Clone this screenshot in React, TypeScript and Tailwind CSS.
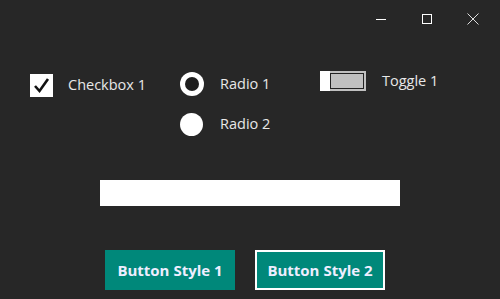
import React from "react";

export default function App() {
  const font = { fontFamily: '"Segoe UI", "Open Sans", "Noto Sans", sans-serif' };
  return (
    <div className="w-[500px] h-[299px] bg-[#272727] flex flex-col text-[#e8e8e8] overflow-hidden" style={font}>
      {/* title bar */}
      <div className="h-[38px] flex justify-end items-stretch pr-[4px]">
        <div className="w-[46px] flex items-center justify-center">
          <div className="w-[10px] h-px bg-white" />
        </div>
        <div className="w-[46px] flex items-center justify-center">
          <div className="w-[10px] h-[10px] border border-white" />
        </div>
        <div className="w-[46px] flex items-center justify-center">
          <svg width="12" height="12" viewBox="0 0 12 12">
            <path d="M0.5 0.5 L11.5 11.5 M11.5 0.5 L0.5 11.5" stroke="#ddd" strokeWidth="1" />
          </svg>
        </div>
      </div>

      {/* controls row */}
      <div className="flex items-start mt-[33px] pl-[30px]">
        <div className="w-[150px] flex items-center h-[24px] mt-[2px]">
          <div className="w-[23px] h-[23px] bg-white flex items-center justify-center">
            <svg width="19" height="19" viewBox="0 0 19 19">
              <path d="M3 10 L7.5 15 L16 3" fill="none" stroke="#111" strokeWidth="2.6" />
            </svg>
          </div>
          <span className="ml-[15px] text-[14.5px] leading-none">Checkbox 1</span>
        </div>

        <div className="w-[140px] flex flex-col gap-[16px] mt-[1px]">
          <div className="flex items-center h-[24px]">
            <div className="w-[24px] h-[24px] rounded-full bg-white flex items-center justify-center">
              <div className="w-[14px] h-[14px] rounded-full bg-[#1e1e1e]" />
            </div>
            <span className="ml-[16px] text-[14.5px] leading-none">Radio 1</span>
          </div>
          <div className="flex items-center h-[24px]">
            <div className="w-[23px] h-[23px] rounded-full bg-white" />
            <span className="ml-[17px] text-[14.5px] leading-none">Radio 2</span>
          </div>
        </div>

        <div className="flex items-center h-[20px]">
          <div className="w-[46px] h-[20px] bg-[#c0c0c0] relative flex">
            <div className="w-[10px] h-[20px] bg-white" />
            <div className="flex-1 mt-[2px] mb-[2px] mr-[2px] border border-[#222] bg-[#c0c0c0]" />
          </div>
          <span className="ml-[16px] text-[14.5px] leading-none">Toggle 1</span>
        </div>
      </div>

      {/* bar */}
      <div className="ml-[100px] mt-[44px] w-[300px] h-[26px] bg-white" />

      {/* buttons */}
      <div className="flex ml-[105px] mt-[44px] gap-[20px]">
        <div className="w-[130px] h-[40px] bg-[#00887a] flex items-center justify-center text-[15px] font-bold text-[#eef]">
          Button Style 1
        </div>
        <div className="w-[130px] h-[40px] bg-[#00887a] border-2 border-white flex items-center justify-center text-[15px] font-bold text-[#eef]">
          Button Style 2
        </div>
      </div>
    </div>
  );
}
